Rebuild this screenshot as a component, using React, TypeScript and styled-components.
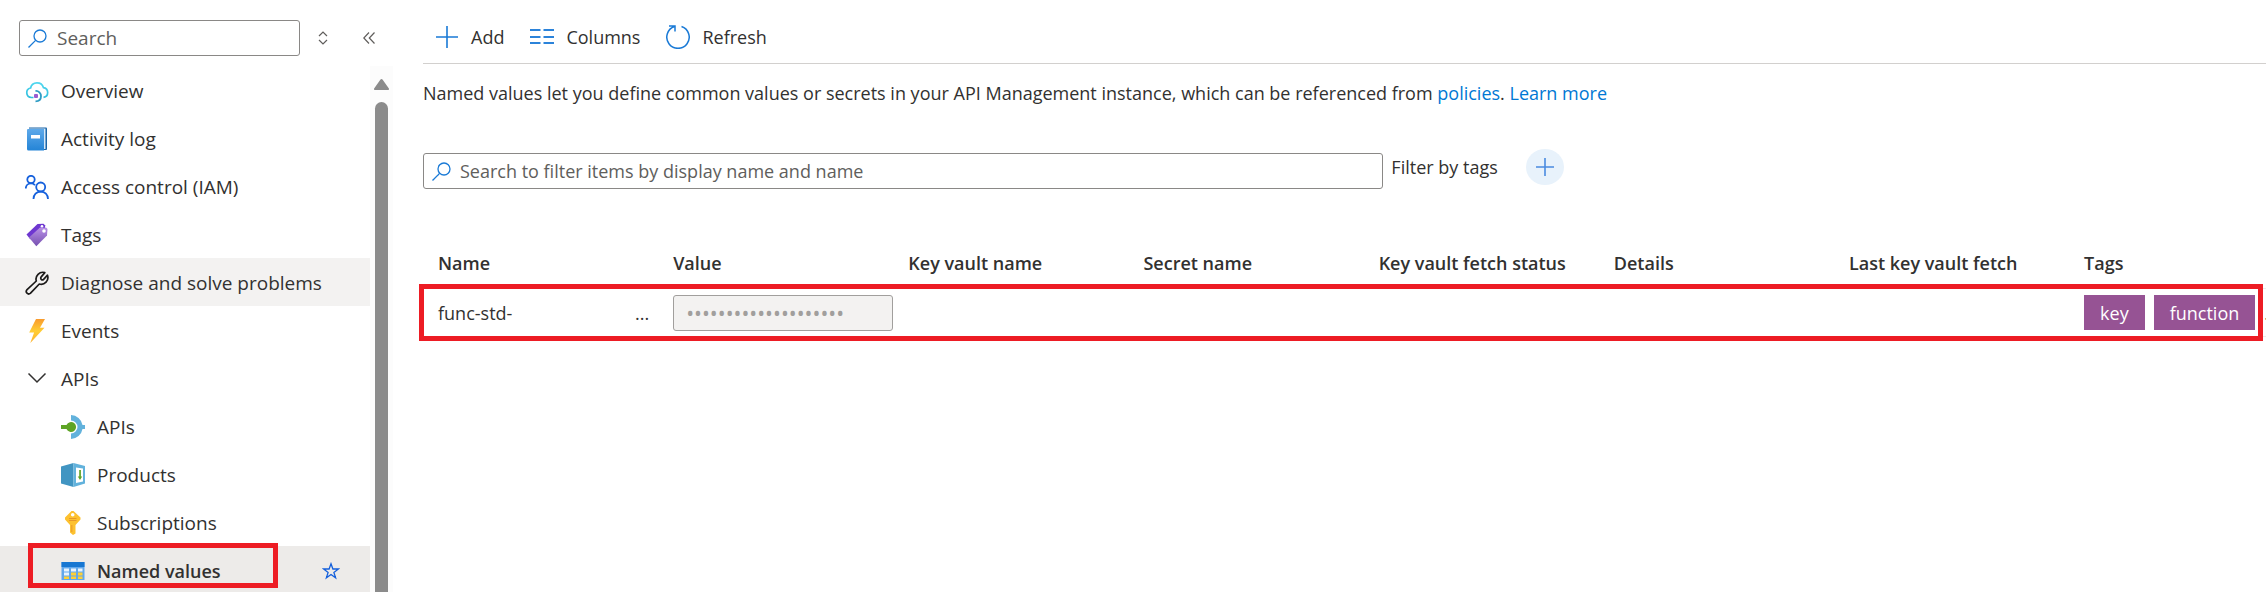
import React from "react";
import styled, { createGlobalStyle, css } from "styled-components";

const Global = createGlobalStyle`
  * { box-sizing: border-box; }
  body { margin: 0; background: #fff; }
  body, button, input { font-family: "Open Sans", "Noto Sans", sans-serif; font-size: 19px; line-height: 26px; color: #323130; }
  main, main button, main input, main table { font-size: 18px; }
  button { background: none; border: 0; padding: 0; cursor: pointer; }
  svg { display: block; flex: none; }
`;

const Page = styled.div`
  display: flex;
  height: 100vh;
  overflow: hidden;
`;

const Sidebar = styled.aside`
  flex: none;
  width: 393px;
  display: flex;
  flex-direction: column;
`;

const SidebarTop = styled.div`
  flex: none;
  display: flex;
  align-items: center;
  padding: 20px 0 10px 19px;
`;

const SearchField = styled.label<{ $width: string; $gap: number }>`
  display: flex;
  align-items: center;
  gap: ${(p) => p.$gap}px;
  width: ${(p) => p.$width};
  height: 36px;
  padding: 0 8px;
  border: 1px solid #8a8886;
  border-radius: 3px;
`;

const SearchInput = styled.input`
  flex: 1;
  min-width: 0;
  border: 0;
  outline: 0;
  padding: 0;
  background: transparent;
  &::placeholder { color: #605e5c; opacity: 1; }
`;

const SmallButton = styled.button`
  display: grid;
  place-items: center;
  width: 46px;
  height: 36px;
`;

const SidebarBody = styled.div`
  flex: 1;
  min-height: 0;
  display: flex;
`;

const Nav = styled.nav`
  flex: 1;
  min-width: 0;
  overflow: hidden;
`;

const NavRow = styled.div<{ $bg?: string }>`
  position: relative;
  display: flex;
  align-items: center;
  height: 48px;
  padding-top: 2px;
  background: ${(p) => p.$bg ?? "transparent"};
`;

const NavLink = styled.a<{ $nested?: boolean; $current?: boolean }>`
  flex: 1;
  display: flex;
  align-items: center;
  gap: 12px;
  padding-left: ${(p) => (p.$nested ? 61 : 25)}px;
  color: #323130;
  text-decoration: none;
  font-size: ${(p) => (p.$current ? 18 : 19)}px;
  font-weight: ${(p) => (p.$current ? 600 : 400)};
`;

const Highlight = styled.div`
  position: absolute;
  border: 5px solid #ed1c24;
  pointer-events: none;
`;

const NavHighlight = styled(Highlight)`
  inset: -3px 92px 6px 28px;
`;

const RowHighlight = styled(Highlight)`
  inset: -5px 3px -4px -4px;
`;

const Favorite = styled.button`
  margin-right: 30px;
`;

const Track = styled.div`
  flex: none;
  width: 23px;
  background: #fcfcfc;
  display: flex;
  flex-direction: column;
  align-items: center;
  gap: 12px;
  padding-top: 13px;
`;

const Thumb = styled.div`
  flex: 1;
  width: 13px;
  border-radius: 7px 7px 0 0;
  background: #8b8b8b;
`;

const Main = styled.main`
  flex: 1;
  min-width: 0;
  padding-left: 30px;
`;

const Toolbar = styled.div`
  display: flex;
  align-items: center;
  gap: 26px;
  height: 64px;
  padding: 10px 12px 0;
  border-bottom: 1px solid #d2d0ce;
`;

const Command = styled.button`
  display: flex;
  align-items: center;
  gap: 12px;
`;

const Description = styled.p`
  margin: 16px 0 0;
`;

const TextLink = styled.a`
  color: #0078d4;
  text-decoration: none;
`;

const FilterBar = styled.div`
  display: flex;
  align-items: center;
  margin-top: 43px;
  height: 44px;
`;

const TagFilter = styled.div`
  display: flex;
  align-items: center;
  gap: 28px;
  margin: 0 0 8px 8px;
`;

const AddFilter = styled.button`
  display: grid;
  place-items: center;
  width: 38px;
  height: 36px;
  border-radius: 50%;
  background: #e8f2fb;
`;

const TableWrap = styled.div`
  margin-top: 48px;
`;

const Table = styled.table`
  width: 100%;
  table-layout: fixed;
  border-collapse: separate;
  border-spacing: 0;
`;

const cell = css`
  height: 48px;
  padding: 0 0 0 15px;
  text-align: left;
  vertical-align: middle;
  white-space: nowrap;
  border-bottom: 1px solid #edebe9;
`;

const HeadCell = styled.th<{ $last?: boolean }>`
  ${cell}
  padding-bottom: 4px;
  font-weight: 600;
  width: ${(p) => (p.$last ? "auto" : "12.76%")};
`;

const BodyRow = styled.tr`
  position: relative;
`;

const Cell = styled.td`
  ${cell}
`;

const NameCell = styled.div`
  display: flex;
  justify-content: space-between;
  padding-right: 9px;
`;

const SecretInput = styled.input`
  display: block;
  width: 100%;
  height: 36px;
  padding: 0 12px;
  border: 1px solid #a19f9d;
  border-radius: 3px;
  background: #f3f2f1;
  color: #a19f9d;
  main & { font-size: 21px; }
`;

const TagList = styled.div`
  display: flex;
  gap: 9px;
`;

const Tag = styled.span`
  padding: 5px 16px 4px;
  background: #965394;
  color: #fff;
`;

const More = styled.span`
  padding-top: 5px;
`;

const SearchIcon = () => (
  <svg width="19" height="19" viewBox="0 0 19 19" fill="none" stroke="#1a7ad6" strokeWidth="1.3">
    <circle cx="12" cy="7" r="6" />
    <path d="M7.6 11.4L.5 18.5" />
  </svg>
);

const PlusIcon = ({ size, color }: { size: number; color: string }) => (
  <svg width={size} height={size} viewBox={`0 0 ${size} ${size}`} stroke={color} strokeWidth="1.6">
    <path d={`M${size / 2} 1v${size - 2}M1 ${size / 2}h${size - 2}`} />
  </svg>
);

const icons: Record<string, React.ReactNode> = {
  overview: (
    <svg width="24" height="24" viewBox="0 0 24 24" fill="none">
      <defs>
        <linearGradient id="cloud" x1="0" y1="0" x2="0" y2="1"><stop stopColor="#50d7ef" /><stop offset="1" stopColor="#32bedd" /></linearGradient>
      </defs>
      <path d="M8.5 18.5H6.5A4.8 4.8 0 0 1 5.6 9 6.6 6.6 0 0 1 18.4 8.6 4.9 4.9 0 0 1 18.5 18.3" stroke="url(#cloud)" strokeWidth="1.7" />
      <path d="M10.5 12a5 5 0 0 1 5.5 5.2c0 3-2 5-5.5 5.2" stroke="#2f9cc4" strokeWidth="1.8" />
      <rect x="9" y="15" width="4" height="4" rx="1" fill="#9a5bd0" />
    </svg>
  ),
  log: (
    <svg width="24" height="24" viewBox="0 0 24 24">
      <defs><linearGradient id="book" x1="0" y1="0" x2="0" y2="1"><stop stopColor="#5ea9ea" /><stop offset="1" stopColor="#2484d6" /></linearGradient></defs>
      <path d="M4 .5h17a1 1 0 0 1 1 1V22a1 1 0 0 1-1 1H4z" fill="#1b65a8" />
      <path d="M4 1.5h16.5V22H4z" fill="#d5e8f8" />
      <path d="M2 2.5A1.5 1.5 0 0 1 3.5 2H19v21.5H3.5A1.5 1.5 0 0 1 2 22z" fill="url(#book)" />
      <rect x="6" y="8" width="9" height="3.5" fill="#fff" />
    </svg>
  ),
  iam: (
    <svg width="24" height="24" viewBox="0 0 24 24" fill="none" stroke="#1560dc" strokeWidth="1.8">
      <circle cx="6" cy="4.5" r="3.7" />
      <path d="M.8 13.5c0-3 2.2-5.2 5.2-5.2 1.8 0 3 .6 4 1.8" />
      <circle cx="15.7" cy="12" r="4.5" />
      <path d="M8.500 24c0-4.200 3-7.400 7.200-7.400S23 19.800 23 24" />
    </svg>
  ),
  tags: (
    <svg width="24" height="24" viewBox="0 0 24 24">
      <defs><linearGradient id="tag" x1="0" y1="0" x2="0" y2="1"><stop stopColor="#b890e6" /><stop offset="1" stopColor="#7650b0" /></linearGradient></defs>
      <path d="M1.5 11.5L12.5 1l6-.3 1.5 1.5.3 5L9 17 5 16z" fill="#6e37d0" />
      <path d="M4 14.5L15 4.5l6.5.3 1 1.2-.5 6.5L11.3 23.3z" fill="url(#tag)" />
      <circle cx="17" cy="3.2" r="1.3" fill="#fff" />
      <circle cx="19" cy="8" r="1.8" fill="#fff" />
    </svg>
  ),
  wrench: (
    <svg width="24" height="24" viewBox="0 0 24 24" fill="none" stroke="#1b1a19" strokeWidth="1.7" strokeLinejoin="round">
      <path d="M19.8 1.6A6.8 6.8 0 0 0 11.3 10L1.8 18.9a2.5 2.5 0 0 0 3.5 3.5L14.3 13a6.8 6.8 0 0 0 8.2-8.8L18.600 8.300a1.600 1.600 0 0 1-2.400-2.400z" />
    </svg>
  ),
  events: (
    <svg width="24" height="24" viewBox="0 0 24 24">
      <defs><linearGradient id="bolt" x1="0" y1="0" x2="0" y2="1"><stop stopColor="#f99b2e" /><stop offset=".5" stopColor="#ffce36" /><stop offset="1" stopColor="#fdb12c" /></linearGradient></defs>
      <path d="M11 0h9l-5 8.8h4.5L5.3 24l3.8-10.5H4.2z" fill="url(#bolt)" />
    </svg>
  ),
  chevron: (
    <svg width="24" height="24" viewBox="0 0 24 24" fill="none" stroke="#323130" strokeWidth="1.5">
      <path d="M3.5 6.5L12 15l8.5-8.5" />
    </svg>
  ),
  apis: (
    <svg width="24" height="24" viewBox="0 0 24 24">
      <path d="M10 0a12 12 0 0 1 11.5 10H24v4h-2.5A12 12 0 0 1 10 24v-5.5a6.5 6.5 0 0 0 0-13z" fill="#62b2dc" />
      <path d="M0 10h5.5a5 5 0 1 1 0 4H0z" fill="#5ea425" />
    </svg>
  ),
  products: (
    <svg width="24" height="24" viewBox="0 0 24 24">
      <path d="M0 3.5L12.5 0v24L0 20.5z" fill="#4195c2" />
      <path d="M12.5 0L24 3v17.5L12.5 24z" fill="#62b2dc" />
      <path d="M15 4.5l7 1v13L15 20z" fill="#fff" />
      <path d="M18.2 7h1.7v6.5h1.3L19 17l-2.2-3.5h1.4z" fill="#5ea425" />
    </svg>
  ),
  key: (
    <svg width="24" height="24" viewBox="0 0 24 24">
      <path d="M10.5 0h2l7 6.5v2L14.5 14v8.5L12 24l-3-2.5V14L4 8.5v-2z" fill="#fdc12f" />
      <circle cx="11.7" cy="3.8" r="1.8" fill="#fff" />
      <path d="M8 7.5h7.5M8 9.5h7.5M10.8 14v7" stroke="#e8982a" strokeWidth="1" />
    </svg>
  ),
  named: (
    <svg width="24" height="24" viewBox="0 0 24 24">
      <path d="M.5 3h23v18H.5z" fill="#62a8ec" />
      <path d="M.5 3h23v5H.5z" fill="#1877d2" />
      <path d="M3 9.5h5v3H3zm7 0h5v3h-5zm7 0h4.5v3H17zM3 13.5h5v3H3z" fill="#e8f3fd" />
      <path d="M10 13.5h5v3h-5zm7 0h4.5v3H17zM3 17.5h5v2.5H3zm7 0h5v2.5h-5zm7 0h4.5v2.5H17z" fill="#ffd034" />
    </svg>
  ),
};

const navItems: { icon: string; label: string; nested?: boolean; bg?: string; current?: boolean }[] = [
  { icon: "overview", label: "Overview" },
  { icon: "log", label: "Activity log" },
  { icon: "iam", label: "Access control (IAM)" },
  { icon: "tags", label: "Tags" },
  { icon: "wrench", label: "Diagnose and solve problems", bg: "#f3f2f1" },
  { icon: "events", label: "Events" },
  { icon: "chevron", label: "APIs" },
  { icon: "apis", label: "APIs", nested: true },
  { icon: "products", label: "Products", nested: true },
  { icon: "key", label: "Subscriptions", nested: true },
  { icon: "named", label: "Named values", nested: true, bg: "#edebe9", current: true },
];

const columns = ["Name", "Value", "Key vault name", "Secret name", "Key vault fetch status", "Details", "Last key vault fetch", "Tags"];

export default function App() {
  return (
    <>
      <Global />
      <Page>
        <Sidebar>
          <SidebarTop>
            <SearchField $width="281px" $gap={10}>
              <SearchIcon />
              <SearchInput aria-label="Search" placeholder="Search" />
            </SearchField>
            <SmallButton aria-label="Expand or collapse all">
              <svg width="10" height="14" viewBox="0 0 10 14" fill="none" stroke="#605e5c" strokeWidth="1.2">
                <path d="M1 5l4-4 4 4M1 9l4 4 4-4" />
              </svg>
            </SmallButton>
            <SmallButton aria-label="Collapse menu">
              <svg width="12" height="12" viewBox="0 0 12 12" fill="none" stroke="#605e5c" strokeWidth="1.2">
                <path d="M6 .5L.8 6 6 11.5M11.5.5L6.3 6l5.2 5.5" />
              </svg>
            </SmallButton>
          </SidebarTop>
          <SidebarBody>
            <Nav aria-label="Resource menu">
              {navItems.map((item) => (
                <NavRow key={item.icon} $bg={item.bg}>
                  <NavLink href="#" $nested={item.nested} $current={item.current} aria-current={item.current ? "page" : undefined}>
                    {icons[item.icon]}
                    {item.label}
                  </NavLink>
                  {item.current && (
                    <>
                      <Favorite aria-label="Add to favorites">
                        <svg width="18" height="18" viewBox="0 0 18 18" fill="none" stroke="#1560dc" strokeWidth="1.3">
                          <path d="M9 1.8l1.9 5.2h5.5l-4.5 3.4 1.7 5.4L9 12.5l-4.6 3.3 1.7-5.4L1.6 7h5.5z" />
                        </svg>
                      </Favorite>
                      <NavHighlight />
                    </>
                  )}
                </NavRow>
              ))}
            </Nav>
            <Track>
              <svg width="15" height="11" viewBox="0 0 15 11" fill="#8b8b8b">
                <path d="M6.3.8a1.5 1.5 0 0 1 2.4 0l6 8.5a1 1 0 0 1-.8 1.7H1.1a1 1 0 0 1-.8-1.7z" />
              </svg>
              <Thumb />
            </Track>
          </SidebarBody>
        </Sidebar>
        <Main>
          <Toolbar>
            <Command>
              <PlusIcon size={24} color="#1a7ad6" />
              Add
            </Command>
            <Command>
              <svg width="24" height="24" viewBox="0 0 24 24" stroke="#2b83da" strokeWidth="2">
                <path d="M0 5h10.5M13.5 5H24M0 12h10.5M13.5 12H24M0 18h10.5M13.5 18H24" />
              </svg>
              Columns
            </Command>
            <Command>
              <svg width="24" height="24" viewBox="0 0 24 24" fill="none" stroke="#1a7ad6" strokeWidth="1.5">
                <path d="M15.5 1.5A11.2 11.2 0 1 1 8.5 1.5M3 1h6v5.5" />
              </svg>
              Refresh
            </Command>
          </Toolbar>
          <Description>
            Named values let you define common values or secrets in your API Management instance, which can be referenced from{" "}
            <TextLink href="#">policies</TextLink>. <TextLink href="#">Learn more</TextLink>
          </Description>
          <FilterBar>
            <SearchField $width="calc(52% + 2px)" $gap={9}>
              <SearchIcon />
              <SearchInput aria-label="Search named values" placeholder="Search to filter items by display name and name" />
            </SearchField>
            <TagFilter>
              <span>Filter by tags</span>
              <AddFilter aria-label="Add tag filter">
                <PlusIcon size={20} color="#4a8be0" />
              </AddFilter>
            </TagFilter>
          </FilterBar>
          <TableWrap>
            <Table>
              <thead>
                <tr>
                  {columns.map((c) => (
                    <HeadCell key={c} $last={c === "Tags"}>{c}</HeadCell>
                  ))}
                </tr>
              </thead>
              <tbody>
                <BodyRow>
                  <Cell>
                    <NameCell>
                      <span>func-std-</span>
                      <span>...</span>
                    </NameCell>
                  </Cell>
                  <Cell><SecretInput type="password" aria-label="Value" readOnly value="12345678901234567890" /></Cell>
                  <Cell />
                  <Cell />
                  <Cell />
                  <Cell />
                  <Cell />
                  <Cell>
                    <TagList>
                      <Tag>key</Tag>
                      <Tag>function</Tag>
                      <More>.</More>
                    </TagList>
                    <RowHighlight />
                  </Cell>
                </BodyRow>
              </tbody>
            </Table>
          </TableWrap>
        </Main>
      </Page>
    </>
  );
}
